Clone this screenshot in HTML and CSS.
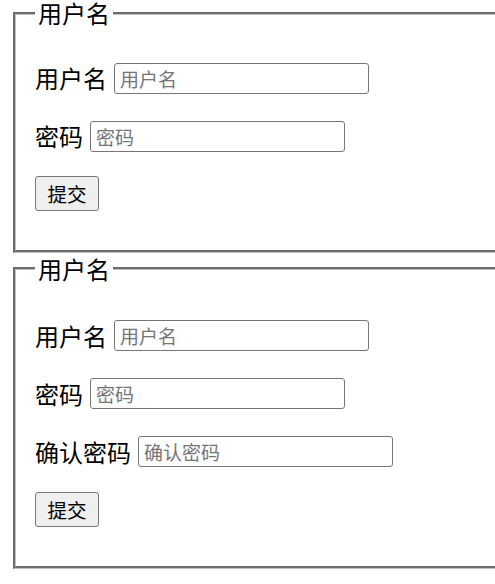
FILE: index.html
```html
<!DOCTYPE html>
<html lang="zh-CN">
<head>
<meta charset="utf-8">
<title>用户名</title>
<link rel="stylesheet" href="styles.css">
</head>
<body>
<form class="form">
  <fieldset class="box">
    <legend class="title">用户名</legend>
    <div class="field">
      <label class="label" for="u1">用户名</label>
      <input class="input" id="u1" type="text" placeholder="用户名">
    </div>
    <div class="field">
      <label class="label" for="p1">密码</label>
      <input class="input" id="p1" type="password" placeholder="密码">
    </div>
    <div class="actions">
      <button class="btn" type="submit">提交</button>
    </div>
  </fieldset>
</form>
<form class="form">
  <fieldset class="box box-second">
    <legend class="title">用户名</legend>
    <div class="field">
      <label class="label" for="u2">用户名</label>
      <input class="input" id="u2" type="text" placeholder="用户名">
    </div>
    <div class="field">
      <label class="label" for="p2">密码</label>
      <input class="input" id="p2" type="password" placeholder="密码">
    </div>
    <div class="field">
      <label class="label" for="c2">确认密码</label>
      <input class="input" id="c2" type="password" placeholder="确认密码">
    </div>
    <div class="actions">
      <button class="btn" type="submit">提交</button>
    </div>
  </fieldset>
</form>
</body>
</html>
```
FILE: styles.css
```css
html {
  overflow: hidden;
  background: #fff;
}

body {
  margin: 0;
  font-family: "Noto Sans CJK SC", "Noto Sans", sans-serif;
  color: #000;
}

.form {
  margin: 0;
}

.box {
  box-sizing: border-box;
  width: 560px;
  margin: 0 0 0 13px;
  padding: 36px 19px 39px;
  border: 3px groove #c0c0c0;
  display: flex;
  flex-direction: column;
  min-width: 0;
}

.box-second {
  margin-top: 2.5px;
  padding-top: 38px;
}

.title {
  font-size: 24px;
  line-height: 26px;
  padding: 0 3px;
}

.field {
  display: flex;
  align-items: center;
  gap: 7px;
  height: 32px;
}

.field + .field {
  margin-top: 26px;
}

.label {
  font-size: 24px;
  line-height: 32px;
  white-space: nowrap;
}

.input {
  box-sizing: border-box;
  width: 255px;
  height: 31px;
  margin: 0;
  padding: 0 5px;
  border: 1px solid #767676;
  border-radius: 3px;
  background: #fff;
  font-family: "Noto Sans CJK SC", "Noto Sans", sans-serif;
  font-size: 19px;
  color: #000;
}

.input::placeholder {
  color: #757575;
}

.actions {
  display: flex;
  margin-top: 24px;
}

.btn {
  box-sizing: border-box;
  width: 64px;
  height: 35px;
  margin: 0;
  padding: 0;
  border: 1px solid #767676;
  border-radius: 3px;
  background: #efefef;
  font-family: "Noto Sans CJK SC", "Noto Sans", sans-serif;
  font-size: 19.5px;
  line-height: 33px;
  color: #000;
}
```
